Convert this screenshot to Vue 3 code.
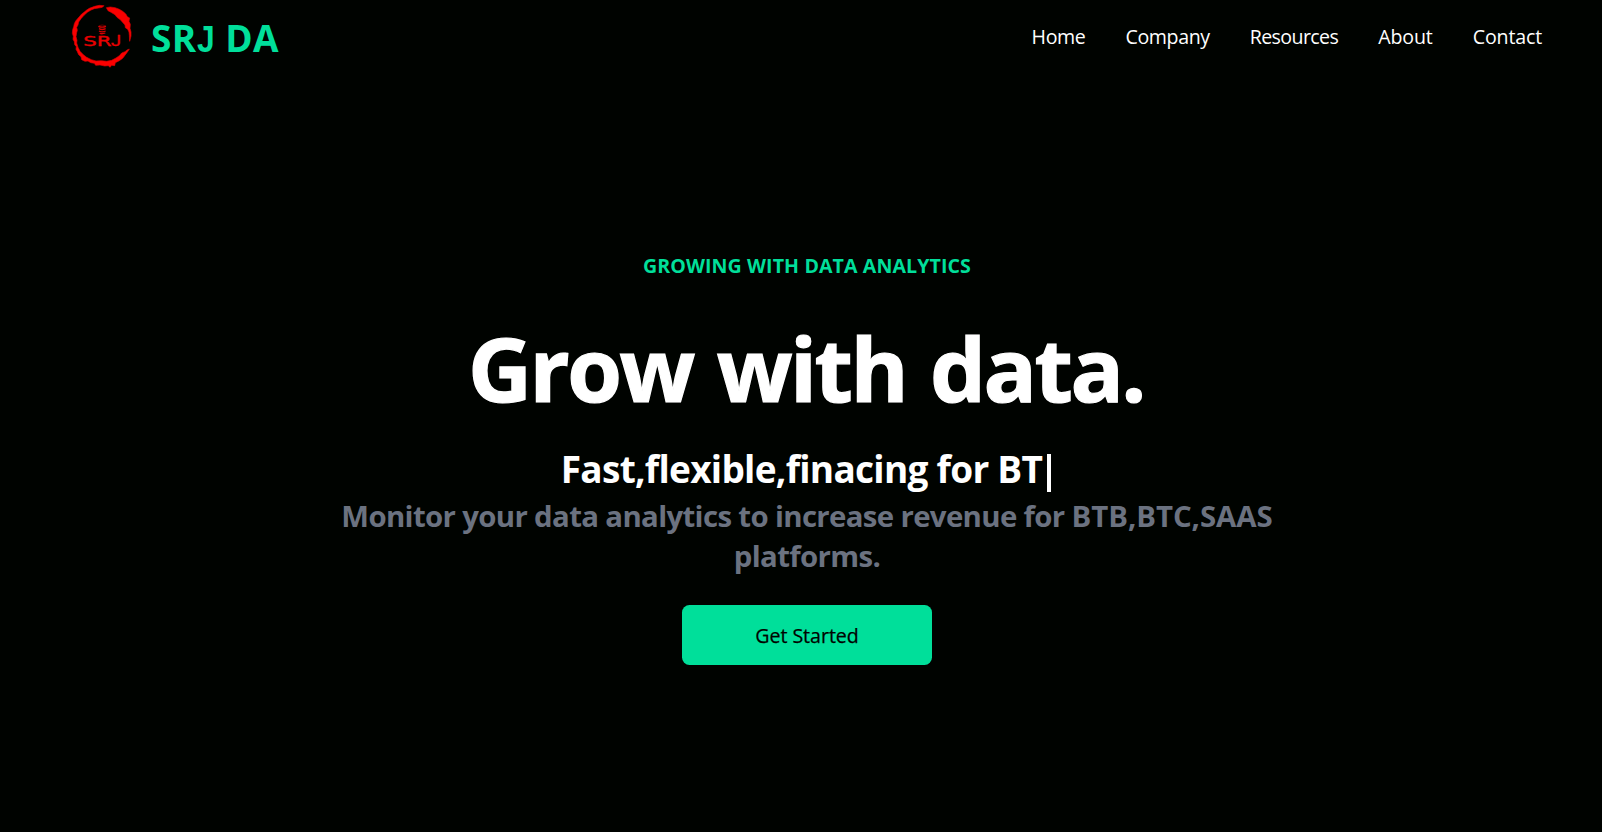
<script setup>
const links = ['Home', 'Company', 'Resources', 'About', 'Contact']
</script>

<template>
  <div class="page">
    <header class="bar">
      <div class="brand">
        <svg class="logo" viewBox="0 0 270 225" aria-label="SRJ">
          <g fill="#fb0000" stroke="#d80000" stroke-width="2" transform="translate(0 1)">
            <path d="M132 16 L118 15 L104 18 L96 21 L88 24 L80 29 L72 36 L65 41 L59 48 L52 56 L47 62 L43 70 L41 79 L38 88 L37 99 L40 108 L39 117 L43 124 L44 133 L49 139 L48 147 L52 154 L56 163 L63 169 L65 178 L75 183 L84 182 L92 187 L103 189 L107 195 L120 194 L134 197 L145 196 L150 201 L155 195 L164 196 L166 187 L178 181 L188 174 L194 166 L200 158 L205 151 L208 146 L201 149 L195 154 L185 158 L178 166 L168 173 L155 180 L140 183 L124 181 L108 182 L94 178 L80 171 L70 163 L60 153 L54 141 L50 128 L51 120 L48 109 L50 97 L52 90 L50 81 L54 74 L56 65 L63 55 L72 45 L82 36 L93 29 L103 25 L116 23 L127 21 Z" />
            <path d="M139 22 L151 20 L165 22 L178 27 L190 34 L198 42 L202 49 L209 53 L207 63 L211 72 L210 84 L213 95 L213 107 L209 123 L208 105 L207 95 L203 87 L196 82 L195 74 L187 65 L181 58 L171 51 L165 43 L153 36 L144 31 Z" />
          </g>
          <g fill="none" stroke="#d60000" stroke-width="4">
            <path d="M115 79 Q126 84 138 79 M117 86 Q126 91 137 86 M117 93 Q126 98 137 93 M119 100 Q126 103 136 99" />
            <path d="M117 77 Q126 73 137 77" stroke-width="2" opacity=".7" />
          </g>
          <g fill="none" stroke="#ea0000" stroke-width="1">
            <text x="70" y="138" textLength="85" lengthAdjust="spacingAndGlyphs" class="logo-text">SR</text>
            <text x="153" y="138" textLength="30" lengthAdjust="spacingAndGlyphs" class="logo-text j">J</text>
          </g>
        </svg>
        <span class="name">SR<span class="j">J</span> DA</span>
      </div>
      <nav>
        <a v-for="l in links" :key="l" :class="l.toLowerCase()">{{ l }}</a>
      </nav>
    </header>
    <main class="hero">
      <p class="eyebrow">GROWING WITH DATA ANALYTICS</p>
      <h1>Grow with data.</h1>
      <p class="typed">Fast,flexible,finacing for BT<span class="caret"></span></p>
      <p class="sub"><span>Monitor your data analytics to increase revenue for <span class="caps">BTB,BTC,SAAS</span></span> <span>platforms.</span></p>
      <button>Get Started</button>
    </main>
  </div>
</template>

<style>
body { margin: 0; background: #000300; }
</style>

<style scoped>
.page { height: 832px; overflow: hidden; background: #000300; color: #fff; font-family: "Open Sans", "Noto Sans", sans-serif; }
.bar { height: 75px; display: flex; justify-content: space-between; padding: 0 60px; }
.brand { display: flex; }
.logo { width: 90px; height: 75px; }
.logo-text { font: 41px "DejaVu Sans", sans-serif; fill: #ea0000; }
.logo-text.j { font-family: Roboto, sans-serif; font-size: 42px; }
.name { color: #00df9a; font-size: 37px; font-weight: 700; line-height: 50px; margin: 13px 0 0 1px; white-space: nowrap; letter-spacing: .3px; }
.name .j { display: inline-block; font-family: "Liberation Sans", sans-serif; line-height: 1; transform: scaleX(.86); transform-origin: right; margin-left: -2px; }
nav { display: flex; gap: 40px; }
nav a { font-size: 19.6px; line-height: 30px; margin-top: 22px; white-space: nowrap; }
.home, .company { letter-spacing: -.38px; }
.resources { letter-spacing: -.62px; }
.about { letter-spacing: -.12px; }
.contact { letter-spacing: -.16px; }
.hero { width: 1000px; margin: 0 auto; padding-left: 12px; display: flex; flex-direction: column; align-items: center; }
p, h1 { margin: 0; white-space: nowrap; }
.eyebrow { color: #00df9a; font-size: 19.6px; font-weight: 700; line-height: 30px; margin-top: 176px; letter-spacing: .09px; }
h1 { font-size: 88.5px; font-weight: 700; line-height: 90px; margin: 42px 2px 0 0; letter-spacing: -2.5px; word-spacing: 3.5px; -webkit-text-stroke: 1.2px #fff; }
.typed { font-size: 37px; font-weight: 700; line-height: 50px; margin: 31px 2px 0 0; display: flex; letter-spacing: -.72px; }
.caret { width: 4px; height: 38px; background: #fff; margin: 10px 0 0 5px; }
.sub { color: #6b7280; font-size: 29.4px; font-weight: 700; line-height: 40px; margin-top: 2px; display: flex; flex-direction: column; align-items: center; letter-spacing: -.66px; }
.caps { letter-spacing: -.05px; }
button { width: 250px; height: 60px; margin-top: 29px; padding: 2px 0 0; border: 0; border-radius: 7.5px; background: #00df9a; color: #000300; font: 500 19.6px/58px "Open Sans", sans-serif; letter-spacing: -.04px; -webkit-text-stroke: .25px #000300; }
</style>
